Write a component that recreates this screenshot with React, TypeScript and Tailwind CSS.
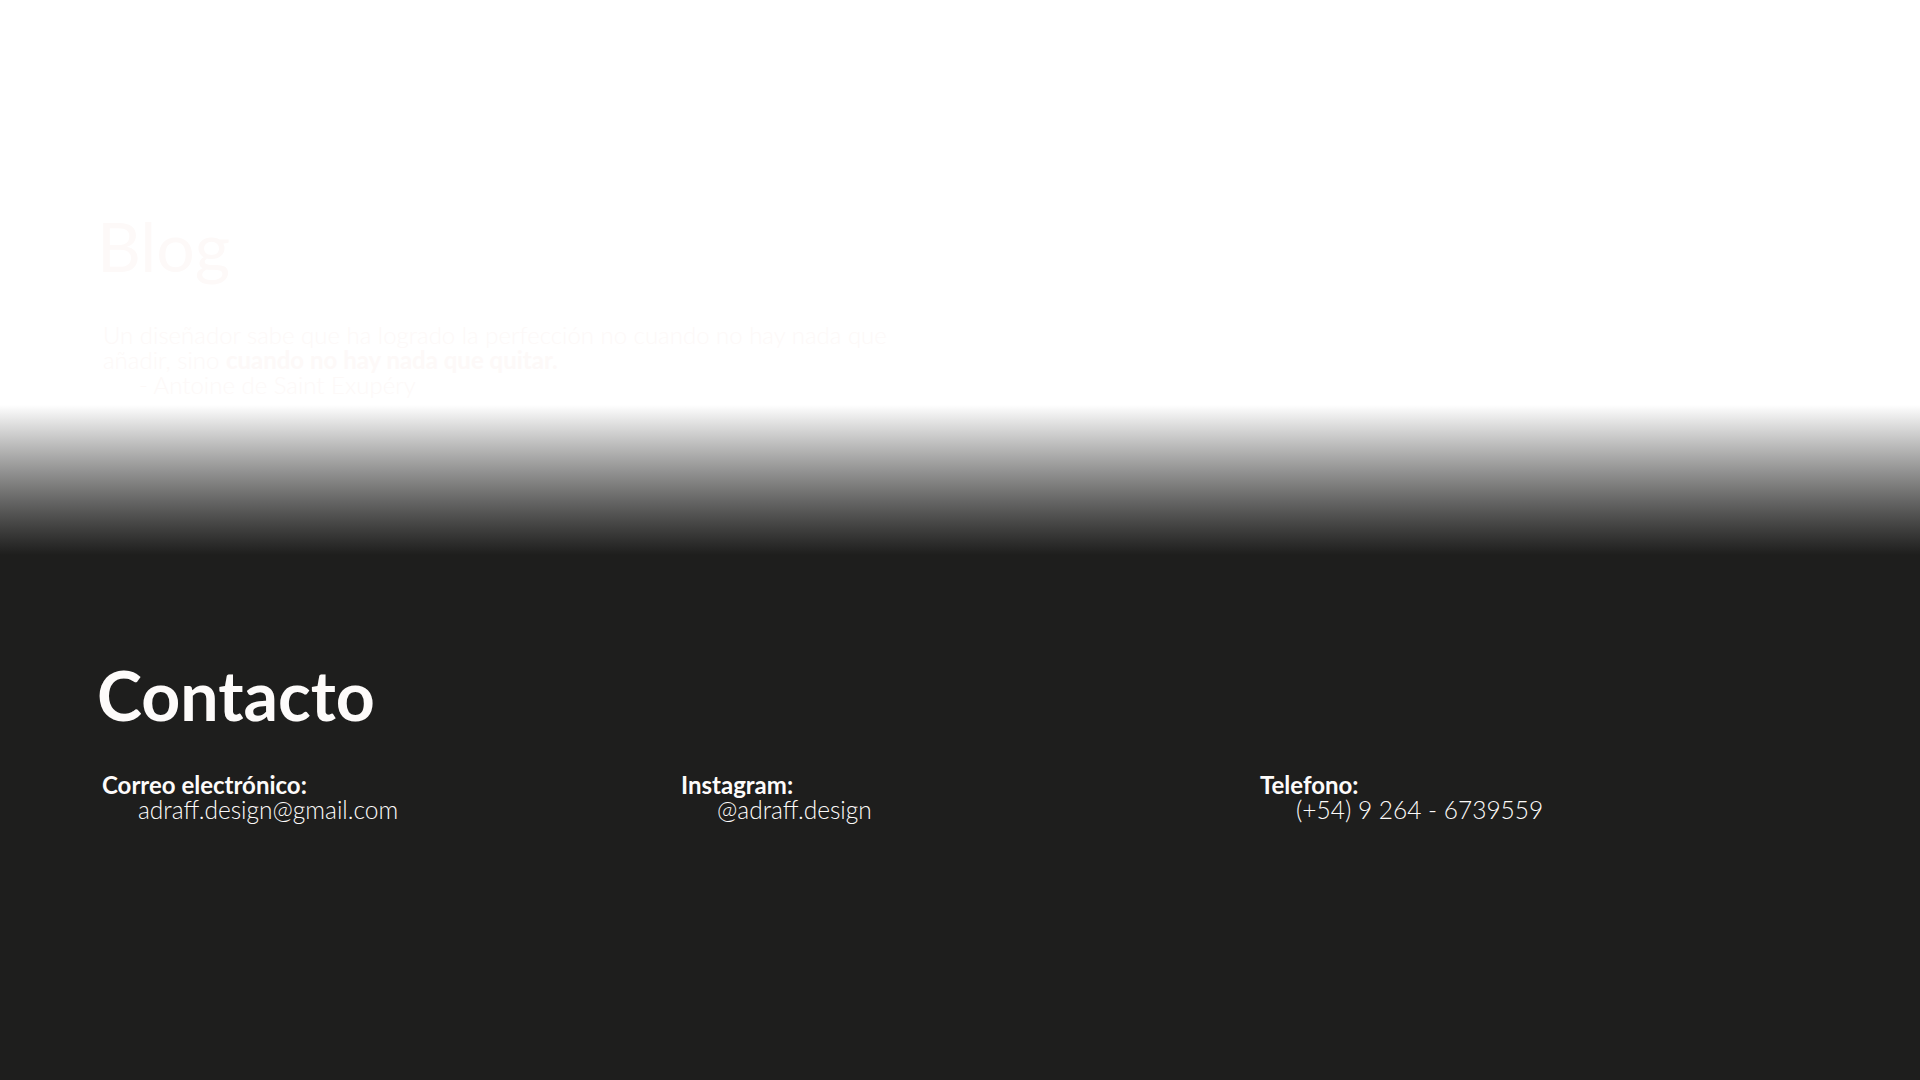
export default function App() {
    return (
        <div className="w-full h-[1080px] flex flex-col bg-[#1e1e1d] font-['Lato',sans-serif] overflow-hidden">
            {/* blog */}
            <section className="h-[405px] bg-white pl-[97px] pt-[206px] text-[#fdf9f8]">
                <h2 className="text-[68px] leading-[80px] font-normal">Blog</h2>
                <blockquote className="mt-[36px] pl-[6px] text-[24px] leading-[25px] font-light">
                    <p>
                        Un diseñador sabe que ha logrado la perfección no cuando no hay nada que
                        <br />
                        añadir, sino <span className="font-bold">cuando no hay nada que quitar.</span>
                    </p>
                    <p className="pl-[36px]">- Antoine de Saint Exupéry</p>
                </blockquote>
            </section>

            <div className="h-[150px] bg-gradient-to-b from-white to-[#1e1e1d]" />

            {/* contacto */}
            <section className="flex-1 pl-[97px] pt-[100px] text-[#fdfbfa]">
                <h2 className="text-[68px] leading-[80px] font-bold">Contacto</h2>
                <div className="mt-[37px] pl-[5px] grid grid-cols-[579px_579px_1fr] text-[24px] leading-[25px]">
                    <div>
                        <div className="font-bold">Correo electrónico:</div>
                        <div className="pl-[36px] font-light text-[24.5px]">adraff.design@gmail.com</div>
                    </div>
                    <div>
                        <div className="font-bold">Instagram:</div>
                        <div className="pl-[36px] font-light text-[24.5px]">@adraff.design</div>
                    </div>
                    <div>
                        <div className="font-bold">Telefono:</div>
                        <div className="pl-[36px] font-light text-[24.5px]">(+54) 9 264 - 6739559</div>
                    </div>
                </div>
            </section>
        </div>
    );
}
